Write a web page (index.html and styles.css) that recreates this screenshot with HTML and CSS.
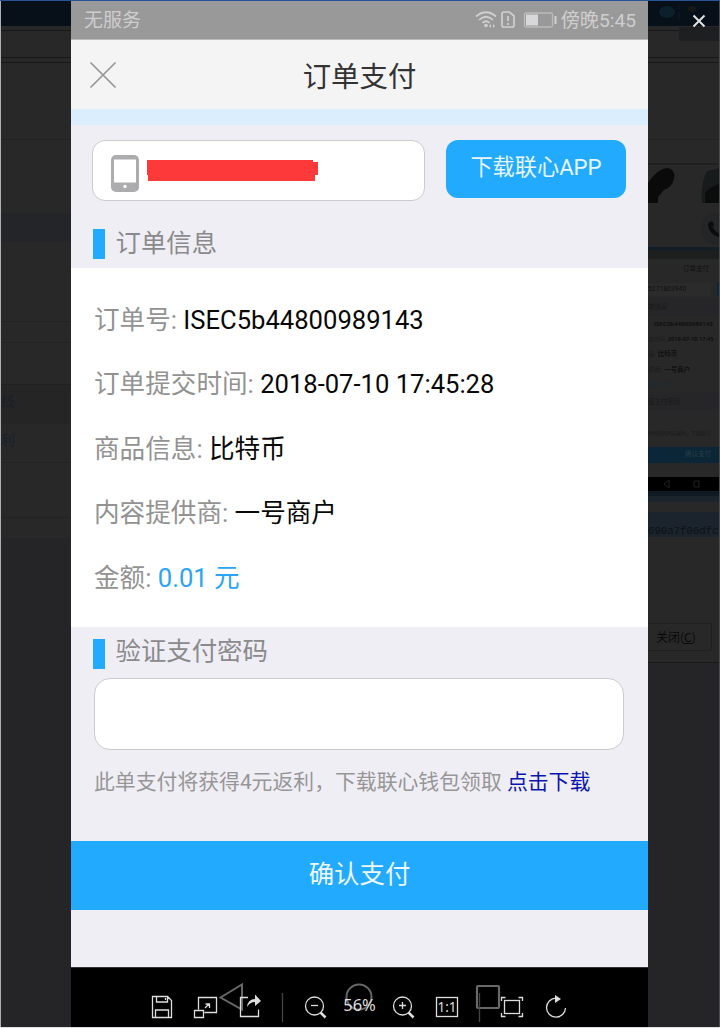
FILE: index.html
```html
<!DOCTYPE html>
<html lang="zh-CN">
<head>
<meta charset="utf-8">
<title>订单支付</title>
<link rel="stylesheet" href="styles.css">
</head>
<body>
<div class="viewer">
  <aside class="side left">
    <span class="menu-word">线</span>
    <span class="menu-word second">利</span>
  </aside>

  <main class="phone">
    <div class="status">
      <span>无服务</span>
      <div class="status-right">
        <svg width="82" height="22" viewBox="0 0 82 22" fill="none" stroke="#d0d0d0" stroke-width="1.7">
          <path d="M1 7.500Q11 -1 21 7.500M4 11Q11 4.500 18 11M7.500 14Q11 10.500 14.500 14"/>
          <circle cx="11" cy="16.500" r="1.800" fill="#d0d0d0" stroke="none"/>
          <path d="M14 17l2-2v4zM20 17l-2-2v4z" fill="#d0d0d0" stroke="none"/>
          <path d="M28 3h6.500l4.500 4v9q0 2-2 2h-8q-2 0-2-2V5q0-2 2-2zM33 7v5M33 14v2"/>
          <rect x="49.500" y="4" width="28" height="14" rx="1.500" stroke="#bcbcbc" stroke-width="1.300"/>
          <path d="M51 5.500h12v11H51z" fill="#d8d8da" stroke="none"/>
          <path d="M80.500 7v8" stroke-width="2"/>
        </svg>
        <span class="clock">傍晚5:45</span>
      </div>
    </div>
    <header class="title-bar">
      <svg class="back" width="28" height="28" viewBox="0 0 28 28"><path d="M1.500 1.500l25 25M26.500 1.500l-25 25" stroke="#969696" stroke-width="1.700"/></svg>
      <h1>订单支付</h1>
    </header>
    <div class="strip"></div>
    <section class="account">
      <div class="account-box">
        <svg width="28" height="38" viewBox="0 0 28 38"><rect width="28" height="37" rx="5" fill="#acacae"/><path d="M3 4.500h22v23H3z" fill="#fff"/><circle cx="14" cy="31.500" r="1.700" fill="#fff"/></svg>
        <svg class="mask" width="171" height="22" viewBox="0 0 171 22"><path d="M0 0h166v2h5v13h-3v6H1v-6H0z" fill="#fd393a"/></svg>
      </div>
      <button class="download">下载联心APP</button>
    </section>
    <h2 class="section-title">订单信息</h2>
    <section class="order">
      <p><span>订单号: </span>ISEC5b44800989143</p>
      <p><span>订单提交时间: </span>2018-07-10 17:45:28</p>
      <p><span>商品信息: </span>比特币</p>
      <p><span>内容提供商: </span>一号商户</p>
      <p><span>金额: </span><b>0.01 元</b></p>
    </section>
    <h2 class="section-title verify">验证支付密码</h2>
    <div class="password"></div>
    <p class="note">此单支付将获得4元返利，下载联心钱包领取 <a>点击下载</a></p>
    <button class="confirm">确认支付</button>
    <div class="system-bar">
      <svg width="577" height="60" viewBox="0 0 577 60" fill="none" stroke="#686868" stroke-width="2">
        <path d="M149.500 29.500L171 16.500V41.500z"/>
        <circle cx="288" cy="29" r="12.500"/>
        <rect x="406" y="18" width="22" height="22" rx="1" stroke-width="2.200"/>
      </svg>
    </div>
  </main>

  <aside class="side right">
    <div class="window-top">
      <svg width="72" height="42" viewBox="0 0 72 42"><ellipse cx="19" cy="11" rx="8" ry="6" fill="#0c202b"/><path d="M31 5v3M31 11v7" stroke="#0b1f31"/><ellipse cx="44" cy="8" rx="4" ry="3" fill="#1b1715"/><path d="M31 26h41v14H31z" fill="#1e1f20"/><path d="M45.500 14.500l11 11M56.500 14.500l-11 11" stroke="#e2e2e2" stroke-width="2"/></svg>
    </div>
    <div class="pictures">
      <svg width="72" height="37" viewBox="0 0 72 37"><path d="M0 17Q9 3 19 2Q28 3 26 13Q24 21 16 24L10 31V37H0z" fill="#0b0a0b"/><path d="M54 37Q52 19 59 5L72 2V37z" fill="#181b1b"/><path d="M57 37V27L62 22L72 17V37z" fill="#0b0c0c"/></svg>
    </div>
    <div class="call">
      <svg width="20" height="34" viewBox="0 0 20 34"><circle cx="17" cy="16" r="16" fill="#242527"/><path d="M10.500 8.500L8.500 10q-1.500 5 3 10q4 4 8.500 4v-3q-6-3-7.500-7l1.500-2-1.500-3.500z" fill="#0c0c0d"/></svg>
    </div>
    <div class="mini">
      <div class="mini-status"></div>
      <div class="mini-title">订单支付</div>
      <div class="mini-phone">5271803940</div>
      <div class="mini-head">单信息</div>
      <div class="mini-row r1"><i>:</i> ISEC5b44800989143</div>
      <div class="mini-row r2"><i>交时间:</i> 2018-07-10 17:45</div>
      <div class="mini-row"><i>息:</i> 比特币</div>
      <div class="mini-row"><i>供商:</i> 一号商户</div>
      <div class="mini-row blue">0.01 元</div>
      <div class="mini-head pay">证支付密码</div>
      <div class="mini-note">付将获得4元返利，下载联心</div>
      <div class="mini-confirm">确认支付</div>
      <div class="mini-nav"><svg width="72" height="14" viewBox="0 0 72 14" fill="none" stroke="#202020"><path d="M16 7l5-4v8zM46 4h5v6h-5z"/></svg></div>
    </div>
    <div class="taskline"></div>
    <div class="hash">690a7f06dfc</div>
    <div class="dialog-end"><div class="close-button">关闭(<u>C</u>)</div></div>
  </aside>

  <nav class="tools">
    <svg width="720" height="60" viewBox="0 0 720 60" fill="none" stroke="#dedede" stroke-width="1.300">
      <path d="M152.500 29.500h15l4 4v17h-19zM156.500 30v5h11v-5M165.500 31v2M155.500 50v-7h13v7"/>
      <path d="M198.500 42.500v-12h18v15h-12M194.500 43.500h9v7h-9zM205 41l4-4M205.500 37h4v4"/>
      <path d="M248 30.500h-7.500v19h18v-7"/><path d="M247 40q1-8 8-8v-4.500l6 6.500-6 5v-4q-5 0-8 5z" fill="#dedede" stroke="none"/>
      <path d="M282.500 26v29M479.500 26v29" stroke="#444"/>
      <circle cx="314.500" cy="39" r="9"/><path d="M311 38.500h7"/><path d="M320.500 45.500l5 5" stroke-width="2.500"/>
      <circle cx="402.500" cy="39" r="9"/><path d="M399 38.500h7M402.500 35v7"/><path d="M408.500 45.500l5 5" stroke-width="2.500"/>
      <rect x="436.500" y="30.500" width="21" height="19"/>
      <rect x="504.500" y="33.500" width="15" height="13"/>
      <path d="M501.500 34v-3.500h4M518.500 30.500h4v3.500M522.500 46v3.500h-4M505.500 49.500h-4v-3.500"/>
      <path d="M556 31.200A9.500 9.500 0 1 0 565.500 41"/><path d="M555 28l6 4-6 4z" fill="#dedede" stroke="none"/>
      <text class="percent" x="359.500" y="44" text-anchor="middle">56%</text>
      <text class="ratio" x="447" y="45" text-anchor="middle">1:1</text>
    </svg>
  </nav>
</div>
</body>
</html>
```
FILE: styles.css
```css
* { box-sizing: border-box; }
body { margin: 0; font-family: Roboto, "Noto Sans CJK SC", sans-serif; }
h1, h2, p { margin: 0; font-weight: 400; }
svg { display: block; flex: none; }
button { border: 0; padding: 0; font: inherit; }

.viewer {
  position: relative;
  width: 720px;
  height: 1028px;
  display: grid;
  grid-template-columns: 71px 577px 72px;
  grid-template-rows: 1026px;
  border-top: 1px solid #285493;
  border-bottom: 1px solid #dedee0;
  overflow: hidden;
}
.side { min-width: 0; overflow: hidden; }
.left {
  border-left: 1px solid #aeb0b4;
  padding-top: 386px;
  background: linear-gradient(#070f18 0 25px, #282828 25px 29px, #171717 29px 30px, #282828 30px 56px, #171717 56px 57px, #282828 57px 61px, #171717 61px 62px, #282828 62px 138px, #222 138px 139px, #282828 139px 212px, #242529 212px 241px, #282828 241px 320px, #232323 320px 321px, #282828 321px 341px, #232323 341px 342px, #282828 342px 383px, #202020 383px 384px, #252525 384px 423px, #282828 423px 461px, #232323 461px 462px, #282828 462px 516px, #222 516px 517px, #282828 517px 537px, #252527 537px);
}
.menu-word { display: block; height: 39px; line-height: 28px; font-size: 14px; color: #1a2028; }
.menu-word.second { color: #172130; }

.phone { display: flex; flex-direction: column; background: #f0eef5; min-width: 0; }
.status {
  height: 39px;
  padding: 2px 12px 0 13px;
  display: flex;
  align-items: center;
  justify-content: space-between;
  background: #999;
  border-bottom: 1px solid #bbb;
  color: #cecece;
  font-size: 19px;
  line-height: 36px;
}
.status-right { display: flex; align-items: center; gap: 4px; }
.status-right svg { margin-bottom: 2px; }
.clock { font-size: 19.200px; }
.title-bar {
  height: 69px;
  position: relative;
  background: #f4f4f4;
  text-align: center;
}
.back { position: absolute; left: 18px; top: 21px; }
.title-bar h1 { font-size: 28.4px; line-height: 76px; color: #333; }
.strip { height: 16px; background: #daeefd; }
.account { height: 93px; padding: 15px 22px 0 21px; display: flex; gap: 21px; }
.account-box {
  width: 333px;
  height: 61px;
  padding: 14px 18px 0;
  display: flex;
  gap: 8px;
  background: #fff;
  border: 1.5px solid #cbcbcd;
  border-radius: 13px;
}
.mask { margin-top: 5px; }
.download {
  width: 180px;
  height: 58px;
  padding-bottom: 4px;
  background: #22aaff;
  color: #e8f6ff;
  border-radius: 12px;
  font-size: 22.2px;
  line-height: 50px;
}
.section-title {
  height: 50px;
  padding-left: 22px;
  display: flex;
  gap: 10.500px;
  font-size: 25.4px;
  line-height: 50px;
  color: #8a8a8c;
}
.section-title::before { content: ""; width: 12px; height: 30px; margin-top: 11px; background: #22aaff; }
.order { height: 359px; padding: 19.500px 23px 0; background: #fff; color: #080808; font-size: 25.6px; }
.order p { height: 64.500px; line-height: 65px; white-space: nowrap; }
.order span { color: #929292; }
.order b { color: #2aa5f5; font-weight: 400; }
.section-title.verify { height: 51px; line-height: 49px; }
.section-title.verify::before { margin-top: 12px; }
.password { width: 530px; height: 72px; margin-left: 22.500px; background: #fff; border: 1.500px solid #cbcbcd; border-radius: 16px; }
.note { height: 91px; padding-left: 23px; font-size: 20.850px; line-height: 65px; color: #969696; white-space: nowrap; }
.note a { color: #0a14ae; }
.confirm { height: 69px; padding-bottom: 7px; background: #22aaff; color: #edf8ff; font-size: 25.4px; }
.system-bar { height: 60px; margin-top: 57px; background: #000; border-top: 1px solid #333; }

.right { background: #282828; border-right: 1px solid #4b4c50; white-space: nowrap; color: #101112; }
.window-top { height: 165px; background: linear-gradient(#070f18 0 25px, #282828 25px 29px, #171717 29px 30px, #282828 30px 56px, #171717 56px 57px, #282828 57px 61px, #171717 61px 62px, #282828 62px 138px, #222 138px 139px, #282828 139px 162px, #202020 162px 164px, #2a2a2a 164px); }
.pictures { height: 47px; }
.call { height: 34px; padding-left: 52px; }
.mini { height: 244px; font-size: 6.500px; }
.mini-status { height: 12px; border-top: 3px solid #111e28; background: #1d1f1e; }
.mini-title { height: 22px; padding-left: 35px; line-height: 20px; }
.mini-phone { height: 17px; line-height: 17px; font-size: 6.800px; background: linear-gradient(90deg, #2b2b2b 63px, #282828 63px 69px, #0b2636 69px) 0 2px / 100% 13px no-repeat; }
.mini-head { height: 18px; line-height: 18px; color: #191919; background: #262628; }
.mini-row { height: 15.200px; line-height: 17px; font-weight: 500; color: #0b0b0b; }
.mini-row i { font-style: normal; font-weight: 400; color: #1c1c1c; }
.mini-row.r1 { font-size: 6.200px; padding-left: 3px; }
.mini-row.r2 { font-size: 5.700px; }
.mini-row.blue { color: #152b3b; }
.mini-head.pay { height: 19px; line-height: 21px; }
.mini-note { height: 36px; line-height: 44px; font-size: 5px; color: #191919; }
.mini-confirm { height: 16px; line-height: 15px; background: #0b2636; color: #293d49; padding-left: 37px; }
.mini-nav { height: 14px; margin-top: 14px; background: #000; }
.taskline { height: 21px; background: linear-gradient(#101a22 0 5px, #1b242c 5px 11px, #282828 11px); }
.hash { height: 25px; background: #1b242c; color: #0c1116; font: 10.700px/38px "Liberation Mono", monospace; }
.dialog-end { height: 126px; padding-top: 86px; border-bottom: 1px solid #191919; }
.close-button { width: 64px; height: 28px; border: 1px solid #202020; border-left: 0; border-radius: 0 2px 2px 0; padding-left: 8px; font: 12px/26px "Noto Sans CJK SC", sans-serif; color: #080808; }
.right::after { content: ""; display: block; height: 365px; background: #252527; }

.tools { position: absolute; left: 0; top: 966px; }
.tools text { fill: #dedede; stroke: none; font-family: "Noto Sans", sans-serif; }
.percent { font-size: 16.500px; }
.ratio { font-size: 13.500px; }
```
